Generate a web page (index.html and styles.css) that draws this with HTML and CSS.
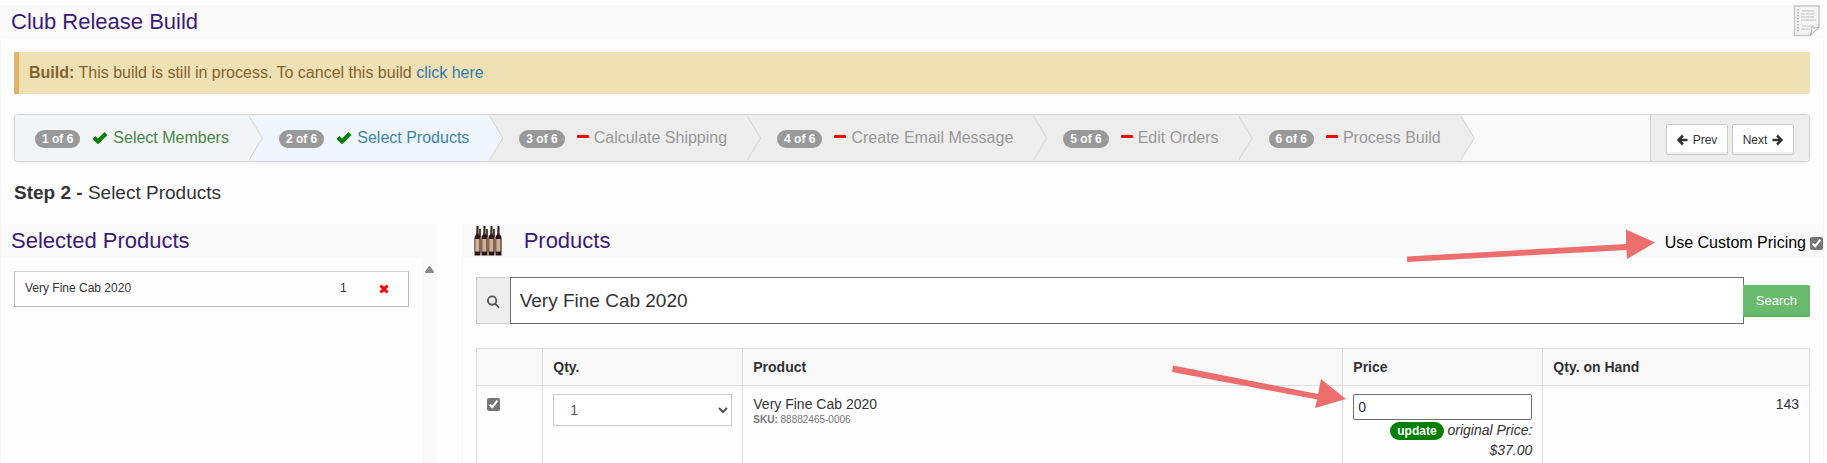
FILE: index.html
```html
<!DOCTYPE html>
<html lang="en">
<head>
  <meta charset="UTF-8">
  <meta name="viewport" content="width=device-width, initial-scale=1.0">
  <title>Club Release Build</title>
  <link rel="stylesheet" href="styles.css">
</head>
<body>

  <header class="widget-header">
    <h1>Club Release Build</h1>
    <svg class="note-icon" width="28" height="32" viewBox="0 0 28 32">
      <path d="M1.500 1h24.500v21l-9 8.500H1.500z" fill="#f4f4f4" stroke="#c8c8c8" stroke-width="1.500" />
      <path d="M26 22l-9 8.500c1.500-2.500 2-5 1.500-8 2.500.6 5 .4 7.500-.5z" fill="#fff" stroke="#b0b0b0" />
      <path d="M5 4v24" stroke="#aaa" stroke-width="1.500" stroke-dasharray="1.500 1.500" />
      <path d="M9 6h12M8 9h14M8 12h13M8 15h15M9 21h12M8 24h9" stroke="#cfcfcf" stroke-width="1.500" stroke-dasharray="4 .5" />
    </svg>
  </header>

  <main class="widget-body">
    <div class="alert"><strong>Build:</strong> This build is still in process. To cancel this build <a href="#">click here</a></div>

    <div class="wizard">
      <ol class="steps">
        <li class="complete">
          <span class="badge">1 of 6</span>
          <svg class="check" width="16" height="12" viewBox="0 0 16 12"><path d="M2 5.500l4 4 8-8" /></svg>
          <span>Select Members</span>
        </li>
        <li class="active">
          <span class="badge">2 of 6</span>
          <svg class="check" width="16" height="12" viewBox="0 0 16 12"><path d="M2 5.500l4 4 8-8" /></svg>
          <span>Select Products</span>
        </li>
        <li>
          <span class="badge">3 of 6</span>
          <i class="minus"></i>
          <span>Calculate Shipping</span>
        </li>
        <li>
          <span class="badge">4 of 6</span>
          <i class="minus"></i>
          <span>Create Email Message</span>
        </li>
        <li>
          <span class="badge">5 of 6</span>
          <i class="minus"></i>
          <span>Edit Orders</span>
        </li>
        <li>
          <span class="badge">6 of 6</span>
          <i class="minus"></i>
          <span>Process Build</span>
        </li>
      </ol>
      <div class="actions">
        <button type="button" class="btn">
          <svg class="arrow" width="11" height="12" viewBox="0 0 11 12"><path d="M6 1.500L1.500 6 6 10.500M2 6h8.500" /></svg>
          Prev
        </button>
        <button type="button" class="btn">
          Next
          <svg class="arrow" width="11" height="12" viewBox="0 0 11 12"><path d="M5 1.500L9.500 6 5 10.500M9 6H.5" /></svg>
        </button>
      </div>
    </div>

    <h2 class="step-title"><strong>Step 2 - </strong>Select Products</h2>

    <div class="panels">
      <section class="panel selected">
        <header class="widget-header">
          <h2>Selected Products</h2>
        </header>
        <div class="scroll-area">
          <ul class="selected-list">
            <li>
              <span class="name">Very Fine Cab 2020</span>
              <span class="qty">1</span>
              <button type="button" class="remove" aria-label="Remove">
                <svg width="10" height="10" viewBox="0 0 10 10"><path d="M1.500 1.500l7 7M8.500 1.500l-7 7" /></svg>
              </button>
            </li>
          </ul>
          <div class="scrollbar">
            <svg width="9" height="7" viewBox="0 0 9 7"><path d="M4.500 1L8 6H1z" fill="#8b8b8b" stroke="#8b8b8b" stroke-width="2" stroke-linejoin="round" /></svg>
          </div>
        </div>
      </section>

      <section class="panel products">
        <header class="widget-header">
          <svg class="bottles" width="28" height="30" viewBox="0 0 28 30">
            <defs>
              <g id="bottle">
                <path d="M2.500 0h2v7c0 2 2 2.500 2 5v17.500h-6V12c0-2.500 2-3 2-5z" fill="#2b1514" />
                <path d="M.5 13h6v12.500h-6z" fill="#8a6555" />
                <path d="M1.500 13h3.500v12.500H1.500z" fill="#cbb394" />
                <path d="M2.500 3h1v6h-1z" fill="#54423f" />
              </g>
            </defs>
            <path d="M5 3h2v6h5V3h2v6h5V3h2v6h2v18H4z" fill="#d9c3b8" />
            <path d="M5 3h2v8H5zM12 3h2v8h-2zM19 3h2v8h-2z" fill="#54423f" />
            <use href="#bottle" />
            <use href="#bottle" x="7" />
            <use href="#bottle" x="14" />
            <use href="#bottle" x="21" />
          </svg>
          <h2>Products</h2>
          <label class="custom-pricing">Use Custom Pricing <input type="checkbox" checked></label>
          <svg class="pointer pointer-pricing" width="250" height="32" viewBox="0 0 250 32">
            <path d="M2 28.500L221 16V1.500l29 13L222 31l-.5-9L2 34z" />
          </svg>
        </header>

        <div class="products-body">
          <form class="search">
            <label class="addon" for="search" aria-label="Search products">
              <svg width="14" height="14" viewBox="0 0 14 14"><circle cx="5.500" cy="5.500" r="4.500" /><path d="M9 9l4 4" /></svg>
            </label>
            <input type="text" id="search" value="Very Fine Cab 2020">
            <button type="button">Search</button>
          </form>

          <table>
            <thead>
              <tr>
                <th class="col-check"></th>
                <th class="col-qty">Qty.</th>
                <th>Product</th>
                <th class="col-price">Price</th>
                <th class="col-hand">Qty. on Hand</th>
              </tr>
            </thead>
            <tbody>
              <tr>
                <td><input type="checkbox" class="row-check" aria-label="Very Fine Cab 2020" checked></td>
                <td>
                  <select aria-label="Quantity">
                    <option>1</option>
                    <option>2</option>
                    <option>3</option>
                  </select>
                </td>
                <td>
                  Very Fine Cab 2020
                  <div class="sku"><strong>SKU:</strong> 88882465-0006</div>
                </td>
                <td class="price">
                  <input type="text" aria-label="Price" value="0">
                  <button type="button" class="badge update">update</button> <em>original Price: $37.00</em>
                  <svg class="pointer pointer-price" width="176" height="50" viewBox="0 0 176 50">
                    <path d="M3 8.500L148 37l3-15 25 20-31 9 2-8.500L2 15z" />
                  </svg>
                </td>
                <td class="hand">143</td>
              </tr>
            </tbody>
          </table>
        </div>
      </section>
    </div>
  </main>

</body>
</html>
```
FILE: styles.css
```css
* {
  box-sizing: border-box;
}
body {
  display: flex;
  flex-direction: column;
  height: 100vh;
  margin: 0;
  padding: 5px 3px 0 0;
  overflow: hidden;
  font-family: "Liberation Sans", Arial, sans-serif;
  font-size: 14px;
  line-height: 20px;
  color: #333;
  background-color: #fefefe;
}
h1, h2 {
  margin: 0;
  font-weight: normal;
}
a {
  color: #337ab7;
  text-decoration: none;
}
button, input, select {
  font-family: inherit;
}
input[type="checkbox"] {
  width: 13px;
  height: 13px;
  margin: 0;
  accent-color: #757575;
}

.widget-header {
  display: flex;
  flex: none;
  align-items: center;
  height: 34px;
  padding: 0 3px 0 11px;
  background-color: #fafafa;
}
.widget-header h1,
.widget-header h2 {
  font-size: 22px;
  line-height: 34px;
  color: #3b1a7a;
}
.note-icon {
  margin: 0 0 2px auto;
}
.widget-body {
  display: flex;
  flex-direction: column;
  flex: 1;
  min-height: 0;
  padding-top: 13px;
  border: solid #f7f7f7;
  border-width: 0 1px;
}

.alert {
  margin: 0 13px 20px;
  padding: 11px 10px;
  font-size: 16px;
  color: #826430;
  background-color: #efe1b3;
  border-left: 5px solid #dfb56c;
}

.wizard {
  display: flex;
  justify-content: space-between;
  margin: 0 13px;
  border: 1px solid #d4d4d4;
  border-radius: 4px;
  background-color: #f9f9f9;
  box-shadow: 0 1px 4px rgba(0, 0, 0, 0.07);
}
.steps {
  display: flex;
  margin: 0;
  padding: 0;
  list-style: none;
}
.steps li {
  position: relative;
  display: flex;
  align-items: center;
  height: 46px;
  padding: 0 20px 0 30px;
  font-size: 16px;
  white-space: nowrap;
  color: #999;
  background-color: #ededed;
}
.steps li:first-child {
  padding-left: 20px;
  border-radius: 4px 0 0 4px;
}
/* chevron: outline behind, fill on top */
.steps li::before,
.steps li::after {
  content: "";
  position: absolute;
  z-index: 1;
  top: 0;
  left: 100%;
  width: 14px;
  height: 46px;
  background-color: #d4d4d4;
  clip-path: polygon(0 0, 100% 50%, 0 100%);
}
.steps li::after {
  left: calc(100% - 1px);
  background-color: #ededed;
}
.steps li.complete,
.steps li.complete::after {
  background-color: #f3f4f5;
}
.steps li.active,
.steps li.active::after {
  background-color: #f1f6fc;
}
.steps li.complete {
  color: #468847;
}
.steps li.active {
  color: #3a87ad;
}
.badge {
  padding: 0 7px;
  border: none;
  border-radius: 9px;
  font-size: 12px;
  font-weight: bold;
  line-height: 18px;
  color: #fff;
  background-color: #999;
}
.steps .badge {
  margin-right: 12px;
  margin-top: 2px;
}
.check {
  margin-right: 5px;
  fill: none;
  stroke: green;
  stroke-width: 4;
}
.minus {
  width: 12px;
  height: 3px;
  margin: 0 5px 3px 0;
  border-radius: 1px;
  background-color: red;
}
.actions {
  display: flex;
  align-items: center;
  gap: 4px;
  padding: 0 15px;
  border-left: 1px solid #d4d4d4;
  border-radius: 0 4px 4px 0;
  background-color: #ededed;
}
.btn {
  display: flex;
  align-items: center;
  justify-content: center;
  gap: 5px;
  width: 62px;
  height: 31px;
  margin-top: 3px;
  padding: 0;
  border: 1px solid #ccc;
  border-radius: 2px;
  font-size: 12px;
  color: #333;
  background-color: #fff;
  box-shadow: inset 0 -2px 0 #eee;
}
.arrow {
  fill: none;
  stroke: #333;
  stroke-width: 2.500;
}

.step-title {
  margin: 19px 13px 20px;
  font-size: 19px;
  line-height: 23px;
}

.panels {
  display: grid;
  grid-template-columns: 24fr 75fr;
  gap: 25px;
  flex: 1;
  min-height: 0;
}
.panel {
  display: flex;
  flex-direction: column;
}
.panel .widget-header {
  position: relative;
  padding: 0 0 0 10px;
}
.scroll-area {
  display: flex;
  flex: 1;
}
.selected-list {
  flex: 1;
  margin: 13px 13px 0;
  padding: 0;
  list-style: none;
}
.selected-list li {
  display: flex;
  align-items: center;
  height: 36px;
  padding: 0 18px 2px 10px;
  border: 1px solid #bbb;
  border-top-color: #d2d2d2;
  font-size: 12px;
}
.selected-list .qty {
  margin-left: auto;
  margin-right: 31px;
}
.remove {
  display: flex;
  width: 12px;
  padding: 2px 1px 0;
  border: none;
  background: none;
}
.remove path {
  stroke: red;
  stroke-width: 3;
}
.scrollbar {
  width: 15px;
  padding: 8px 3px;
  line-height: 0;
  background-color: #fafafa;
}

.bottles {
  margin: 0 22px 0 2px;
}
.custom-pricing {
  display: flex;
  align-items: center;
  gap: 4px;
  margin-left: auto;
  padding-top: 4px;
  font-size: 16px;
  color: #000;
}
.pointer {
  position: absolute;
  overflow: visible;
  fill: #ee6e6e;
}
.pointer-pricing {
  top: 4px;
  right: 168px;
}
.pointer-price {
  top: -29px;
  right: calc(100% - 3px);
}

.products-body {
  flex: 1;
  padding: 19px 13px 0;
  border-left: 1px solid #f7f7f7;
}
.search {
  display: flex;
  align-items: center;
  height: 47px;
  margin-bottom: 24px;
}
.addon {
  display: flex;
  align-items: center;
  width: 34px;
  height: 47px;
  padding: 2px 10px 0;
  border: 1px solid #ccc;
  border-right: none;
  background-color: #eee;
}
.addon svg {
  fill: none;
  stroke: #555;
  stroke-width: 2;
}
.search input {
  flex: 1;
  height: 47px;
  padding: 0 9px;
  border: 1px solid #707070;
  font-size: 19px;
  color: #333;
  background-color: #fff;
}
.search button {
  height: 32px;
  margin-left: -1px;
  padding: 0 13px;
  border: none;
  border-radius: 0 2px 2px 0;
  font-size: 13px;
  color: #fff;
  background-color: #68bb6c;
  box-shadow: inset 0 -2px 0 #5fb063;
}

table {
  width: 100%;
  border-collapse: collapse;
  table-layout: fixed;
}
th, td {
  padding: 8px 10px;
  border: 1px solid #ddd;
  text-align: left;
  vertical-align: top;
}
th {
  background-color: #f9f9f9;
}
.col-check {
  width: 5%;
}
.col-qty,
.col-price {
  width: 15%;
}
.col-hand {
  width: 20%;
}
td .row-check {
  display: block;
  margin-top: 4px;
}
select {
  width: 100%;
  height: 32px;
  padding: 0 0 0 12px;
  border: 1px solid #ccc;
  font-size: 14px;
  color: #555;
  background-color: #fff;
}
.sku {
  font-size: 10px;
  line-height: 12px;
  color: #777;
}
.price,
.hand {
  position: relative;
  text-align: right;
}
.price input {
  display: block;
  width: 100%;
  height: 26px;
  padding: 0 4px;
  border: 1px solid #707070;
  border-radius: 2px;
  font-size: 14px;
  color: #333;
}
.update {
  background-color: green;
}
```
